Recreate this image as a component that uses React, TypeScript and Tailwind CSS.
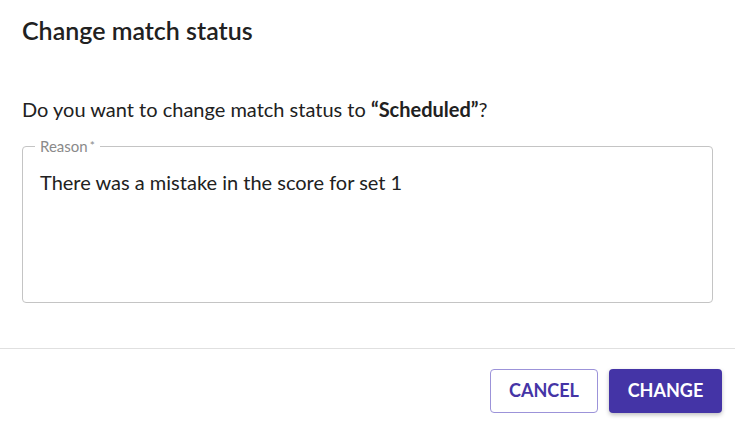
export default function App() {
  return (
    <div className="w-[735px] h-[429px] bg-white flex flex-col font-['Lato','Noto_Sans',sans-serif] text-[#212121]">
      <div className="px-[22px] pt-[15px] h-[62px]">
        <h2 className="text-[25px] font-semibold leading-[30px]">Change match status</h2>
      </div>

      <div className="px-[22px] pt-[35px] flex-1">
        <p className="text-[20px] leading-[24px]">
          Do you want to change match status to <span className="font-bold">“Scheduled”</span>?
        </p>

        <fieldset className="mt-[16px] h-[166px] border border-[#c4c4c4] rounded-[4px] px-[12px]">
          <legend className="px-[5px] text-[15px] leading-[18px] text-[#8a8a8a]">
            Reason<span className="ml-[2px] text-[12px] align-top">*</span>
          </legend>
          <div className="px-[5px] pt-[15px] text-[20px] leading-[24px]">
            There was a mistake in the score for set 1
          </div>
        </fieldset>
      </div>

      <div className="border-t border-[#e0e0e0] h-[81px] flex items-center justify-end gap-[11px] px-[13px] pt-[3px]">
        <button className="h-[44px] w-[108px] rounded-[4px] border border-[#9c93d9] text-[#4434a6] font-bold text-[18px] bg-white">
          CANCEL
        </button>
        <button className="h-[44px] w-[113px] rounded-[4px] bg-[#4434a6] text-white font-bold text-[18px] shadow-[0_2px_4px_rgba(0,0,0,0.25)]">
          CHANGE
        </button>
      </div>
    </div>
  );
}
